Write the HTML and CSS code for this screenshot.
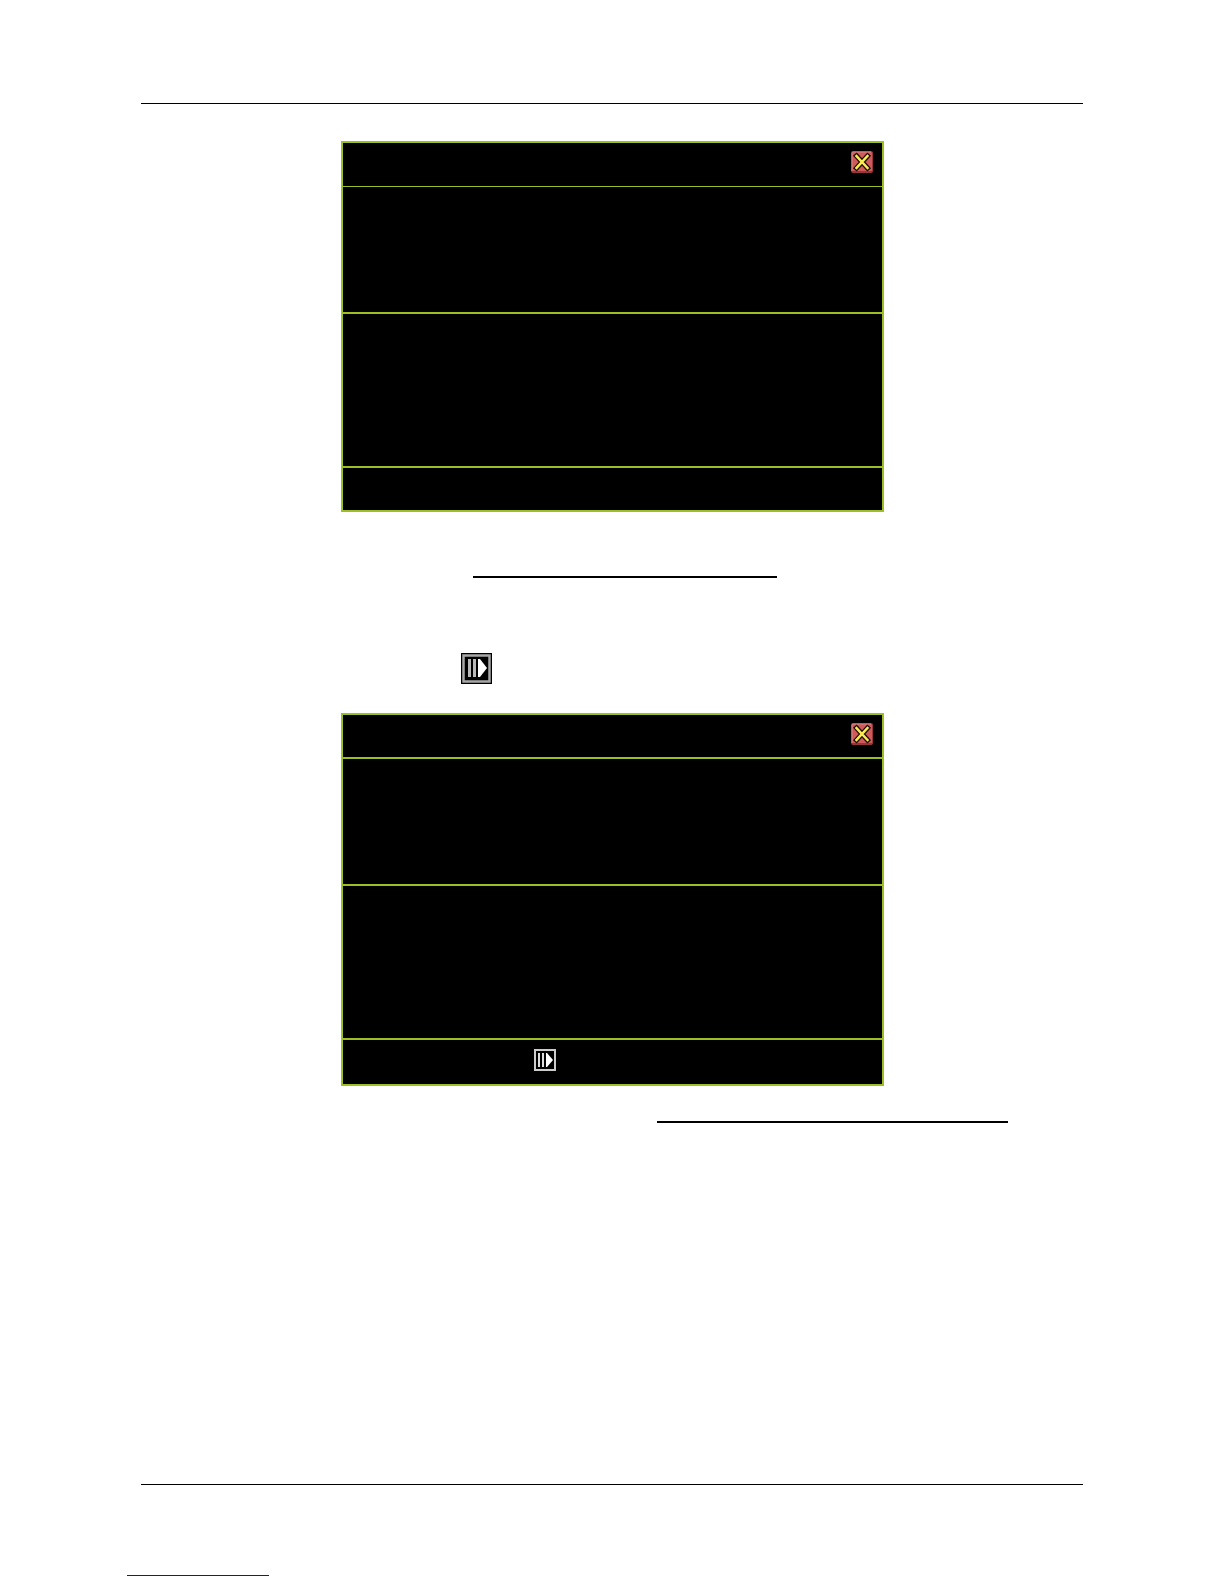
FILE: index.html
```
<!DOCTYPE html>
<html lang="en">
<head>
    <meta charset="UTF-8">
    <meta name="viewport" content="width=device-width, initial-scale=1.0">
    <title></title>
    <link rel="stylesheet" href="styles.css">
</head>
<body>
    <!-- Shared icons -->
    <svg class="icon-defs" aria-hidden="true">
        <symbol id="icon-close" viewBox="0 0 22 22">
            <rect width="22" height="22" rx="2" fill="#98363a"/>
            <rect x="1" y="1" width="20" height="19" rx="1" fill="#cf5a5c"/>
            <path d="M1 20V2q0-1 1-1h18" fill="none" stroke="#dc8684"/>
            <path d="M5.500 5l11 12M16.500 5l-11 12" fill="none" stroke="#1c0c00" stroke-width="5" stroke-linecap="square"/>
            <path d="M5.500 5l11 12M16.500 5l-11 12" fill="none" stroke="#fbec52" stroke-width="2.500" stroke-linecap="square"/>
        </symbol>
        <symbol id="icon-step" viewBox="0 0 31 31">
            <rect width="31" height="31" fill="#000"/>
            <rect x="2.500" y="2.500" width="26" height="26" fill="#000" stroke="#a8a8a8" stroke-width="2.500"/>
            <path d="M7 6h3v18H7zM12 6h3v18h-3z" fill="#b8b8b8"/>
            <path d="M17 6h2l7 9-7 9h-2z" fill="#fff"/>
        </symbol>
        <symbol id="icon-step-small" viewBox="0 0 22 22">
            <rect x="1" y="1" width="20" height="20" fill="#000" stroke="#ccc" stroke-width="2"/>
            <path d="M4 4h2v14H4zM8 4h2v14H8z" fill="#ddd"/>
            <path d="M12 4h1l6 7-6 7h-1z" fill="#fff"/>
        </symbol>
    </svg>

    <main class="page">
        <section class="dialog">
            <div class="dialog-title thin">
                <button type="button" class="icon-button" aria-label="Close"><svg><use href="#icon-close"/></svg></button>
            </div>
            <div class="dialog-info"></div>
            <div class="dialog-body"></div>
            <div class="dialog-bar"></div>
        </section>

        <div class="underline first"></div>

        <svg class="step-icon" aria-hidden="true"><use href="#icon-step"/></svg>

        <section class="dialog">
            <div class="dialog-title">
                <button type="button" class="icon-button" aria-label="Close"><svg><use href="#icon-close"/></svg></button>
            </div>
            <div class="dialog-info"></div>
            <div class="dialog-body"></div>
            <div class="dialog-bar with-button">
                <button type="button" class="icon-button" aria-label="Step"><svg><use href="#icon-step-small"/></svg></button>
            </div>
        </section>

        <div class="underline second"></div>
    </main>

    <footer class="page-footer">
        <a href="#" class="footer-link" aria-label="Back to top"></a>
    </footer>
</body>
</html>
```

FILE: styles.css
```
* {
    box-sizing: border-box;
}

body {
    display: flex;
    flex-direction: column;
    min-height: 100vh;
    margin: 0;
    padding: 103px 141px 8px;
    background-color: #fff;
    font-family: "Liberation Sans", Arial, sans-serif;
}

.icon-defs {
    display: none;
}

.page {
    border-top: 1px solid #000;
    padding-top: 37px;
}

/* Dialogs */
.dialog {
    max-width: 543px;
    margin-left: 200px;
    border: 2px solid #9dbf23;
    background-color: #000;
}

.dialog-title {
    display: flex;
    justify-content: flex-end;
    min-height: 44px;
    padding: 8px 9px 7px;
    border-bottom: 2px solid #9dbf23;
}

.dialog-title.thin {
    border-bottom-width: 1px;
}

.dialog-info {
    min-height: 127px;
    border-bottom: 2px solid #9dbf23;
}

.dialog-body {
    min-height: 154px;
    border-bottom: 2px solid #9dbf23;
}

.dialog-bar {
    min-height: 42px;
}

.dialog-bar.with-button {
    min-height: 44px;
    padding: 9px 191px;
}

/* Icons */
.icon-button {
    display: block;
    width: 22px;
    height: 22px;
    padding: 0;
    border: none;
    background: none;
    cursor: pointer;
}

.icon-button svg {
    display: block;
    width: 22px;
    height: 22px;
}

.step-icon {
    display: block;
    width: 31px;
    height: 31px;
    margin: 75px 0 29px 320px;
}

/* Underlines */
.underline {
    border-top: 2px solid #000;
}

.underline.first {
    max-width: 304px;
    margin: 64px 0 0 332px;
}

.underline.second {
    max-width: 351px;
    margin: 35px 0 0 516px;
}

/* Footer */
.page-footer {
    margin-top: auto;
    padding-top: 90px;
    border-top: 1px solid #000;
}

.footer-link {
    display: block;
    width: 142px;
    margin-left: -14px;
    border-bottom: 1px solid #1414a0;
}
```
